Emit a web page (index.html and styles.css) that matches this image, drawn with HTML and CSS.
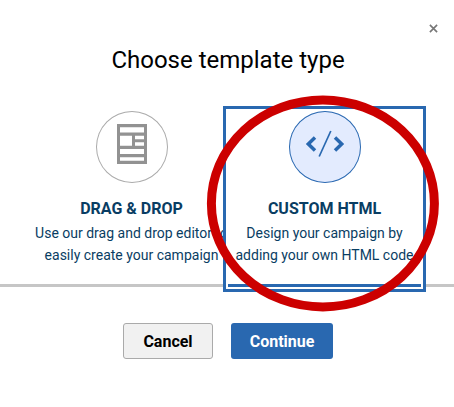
FILE: index.html
```html
<!DOCTYPE html>
<html lang="en">
<head>
<meta charset="utf-8">
<title>Choose template type</title>
<link rel="stylesheet" href="styles.css">
</head>
<body>
<main class="dialog">
  <button class="close" aria-label="Close"><svg width="10" height="10" viewBox="0 0 10 10"><path d="M1 1l8 8M9 1l-8 8"/></svg></button>
  <h1 class="title">Choose template type</h1>
  <div class="options">
    <section class="option">
      <div class="icon">
        <svg width="72" height="72" viewBox="0 0 72 72"><path class="layout" fill-rule="evenodd" d="M21 13h30v40H21zM24 16.200v5.400h24v-5.400zM24 24.700v10.100h12V24.700zM39 24.700v3.500h9v-3.500zM39 31.300v3.500h9v-3.500zM24 38v5h24v-5zM24 46.200v3.600h24v-3.600z"/></svg>
      </div>
      <h2 class="name">DRAG &amp; DROP</h2>
      <p class="text">Use our drag and drop editor to<br>easily create your campaign</p>
    </section>
    <section class="option selected">
      <div class="icon">
        <svg width="72" height="72" viewBox="0 0 72 72"><path class="bracket" d="M26 26.500L19.300 33l6.700 6.500M46 26.500l6.700 6.500-6.700 6.500"/><path class="slash" d="M41.800 20L30.200 45.500"/></svg>
      </div>
      <h2 class="name">CUSTOM HTML</h2>
      <p class="text">Design your campaign by<br>adding your own HTML code</p>
    </section>
  </div>
  <div class="actions">
    <button class="button cancel">Cancel</button>
    <button class="button continue">Continue</button>
  </div>
  <svg class="ring" width="236" height="220" viewBox="0 0 236 220"><ellipse cx="117.900" cy="109.400" rx="111.500" ry="103.500"/></svg>
</main>
</body>
</html>
```

FILE: styles.css
```css
* { box-sizing: border-box; }
body { margin: 0; background: #fff; font-family: Roboto, sans-serif; }
.dialog { position: relative; width: 454px; height: 407px; overflow: hidden; padding-top: 44px; }
.close { position: absolute; top: 24px; right: 16px; width: 9px; height: 9px; padding: 0; border: 0; background: none; }
.close svg { display: block; width: 9px; height: 9px; fill: none; stroke: #777; stroke-width: 1.800; }
.title { margin: 0; height: 32px; padding-left: 2px; font-size: 24px; line-height: 32px; font-weight: 400; text-align: center; color: #000; white-space: nowrap; }
.options { display: flex; height: 211px; padding: 35px 33px 0 35px; border-bottom: 3px solid #c6c6c6; }
.option { flex: 0 0 193px; height: 176px; display: flex; flex-direction: column; align-items: center; color: #093d63; }
.selected { position: relative; background: #fff; border-bottom: 3px solid #2968b0; outline: 3px solid #2968b0; outline-offset: 2px; box-shadow: 0 0 0 2px #fff; }
.icon { flex: none; width: 72px; height: 72px; border-radius: 50%; box-shadow: inset 0 0 0 1px #aaa; }
.selected .icon { background: #e3ebfe; box-shadow: inset 0 0 0 1px #2968b0; }
.icon svg { display: block; }
.layout { fill: #929292; }
.bracket { fill: none; stroke: #2968b0; stroke-width: 3.500; }
.slash { fill: none; stroke: #2968b0; stroke-width: 1.700; }
.name { margin: 16px 0 0; font-size: 16px; line-height: 20px; font-weight: 700; white-space: nowrap; }
.text { margin: 3px 0 0; font-size: 14px; line-height: 22px; text-align: center; white-space: nowrap; }
.actions { display: flex; gap: 18px; padding: 36px 0 0 123px; }
.button { height: 36px; padding: 2px 0 0; border: 0; border-radius: 3px; font: 700 16px/34px Roboto, sans-serif; }
.cancel { width: 90px; border: 1px solid #aaa; line-height: 32px; background: #f1f1f1; color: #000; }
.continue { width: 102px; background: #2968b0; color: #fff; }
.ring { position: absolute; left: 205px; top: 94px; fill: none; stroke: #c00; stroke-width: 9; }
```
